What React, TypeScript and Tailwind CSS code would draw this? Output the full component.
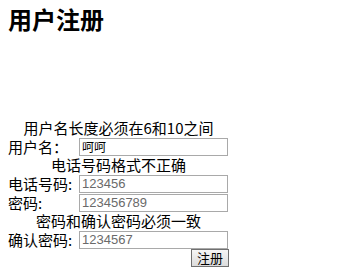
import React from "react";

const cjk = { fontFamily: '"Noto Sans CJK SC", "Noto Sans", sans-serif' };
const num = { fontFamily: '"Liberation Sans", Arial, sans-serif' };

function Msg({ text }: { text: string }) {
  return (
    <div className="h-[18px] flex items-center justify-center text-[15px] leading-[18px] text-black whitespace-nowrap">
      {text}
    </div>
  );
}

function Row({ label, value, dark }: { label: string; value: string; dark?: boolean }) {
  return (
    <div className="h-[19px] flex items-start">
      <div className="w-[71px] h-[19px] flex items-center text-[15px] leading-[18px] text-black whitespace-nowrap">
        {label}
      </div>
      <input
        readOnly
        value={value}
        className={
          "mt-[1px] w-[149px] h-[18px] border border-[#a9a9a9] bg-white px-[2px] outline-none " +
          (dark ? "text-[12px] text-black" : "text-[13px] text-[#6a6a6a]")
        }
        style={dark ? cjk : num}
      />
    </div>
  );
}

export default function App() {
  return (
    <div className="w-[360px] h-[275px] bg-white overflow-hidden" style={cjk}>
      <h1 className="pl-2 pt-[7px] text-[24px] leading-[24px] font-bold text-black mb-[88px]">用户注册</h1>
      <div className="ml-2 w-[221px] flex flex-col">
        <Msg text="用户名长度必须在6和10之间" />
        <Row label="用户名：" value="呵呵" dark />
        <Msg text="电话号码格式不正确" />
        <Row label="电话号码:" value="123456" />
        <Row label="密码:" value="123456789" />
        <Msg text="密码和确认密码必须一致" />
        <Row label="确认密码:" value="1234567" />
        <div className="h-[19px] flex justify-end">
          <button className="w-[38px] h-[18px] border border-[#707070] bg-gradient-to-b from-[#f6f6f6] to-[#dcdcdc] text-[13px] leading-[16px] text-black flex items-center justify-center">
            注册
          </button>
        </div>
      </div>
    </div>
  );
}
